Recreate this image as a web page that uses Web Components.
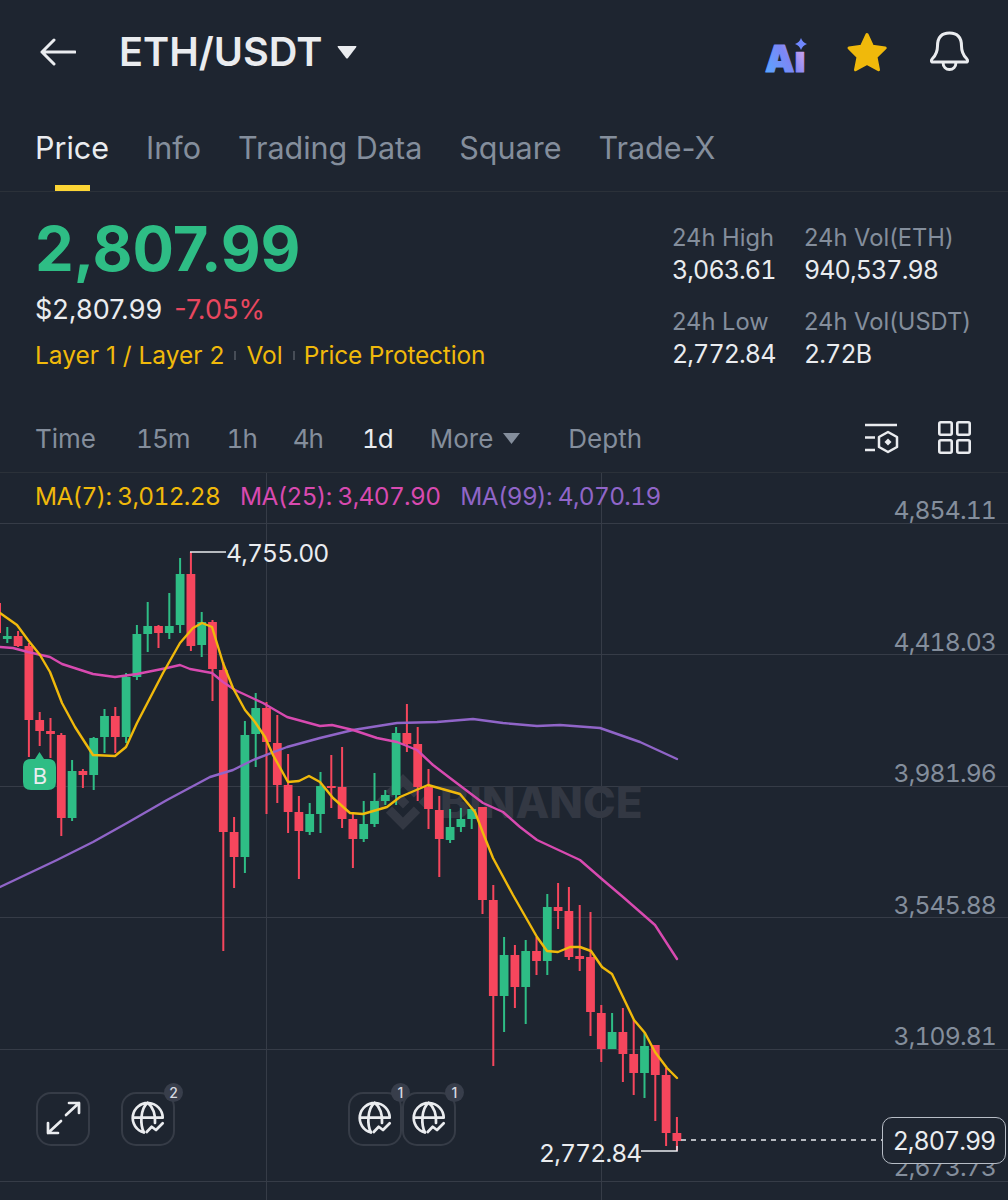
<!DOCTYPE html>
<html lang="en">
<head>
<meta charset="utf-8">
<title>ETH/USDT</title>
<style>
    html, body {
        background: #1e2530;
        color: #eaecef;
        font-family: Inter, "Open Sans", sans-serif;
        height: 1200px;
        margin: 0;
        overflow: hidden;
    }
</style>
</head>
<body>
<market-header>ETH/USDT</market-header>
<market-tabs></market-tabs>
<price-summary></price-summary>
<interval-bar></interval-bar>
<kline-chart></kline-chart>

<script>
const BACKGROUND = '#1e2530';
const GREEN = '#2ebd85';
const RED = '#f6465d';
const YELLOW = '#f0b90b';
const PINK = '#d84ab0';
const PURPLE = '#9065c8';
const GREY = '#848e9c';

// [color, wick top, body top, body bottom, wick bottom], in page pixels
const candles = [
    'g 627 636 639 643', 'r 631 636 646 647', 'r 643 646 720 757', 'r 712 720 731 746',
    'r 718 731 734 758', 'r 733 735 818 836', 'g 760 771 818 821', 'r 769 771 775 788',
    'g 737 738 775 790', 'g 709 716 737 753', 'r 707 716 737 753', 'g 673 677 737 743',
    'g 625 634 677 680', 'g 602 626 634 652', 'r 625 626 633 648', 'g 593 626 633 639',
    'g 558 574 625 633', 'r 552 574 646 651', 'g 612 622 645 657', 'r 620 622 669 701',
    'r 662 670 832 951', 'r 817 832 857 888', 'g 721 735 857 873', 'g 693 708 734 767',
    'r 702 708 742 814', 'r 715 743 785 803', 'r 754 785 812 833', 'r 796 812 831 879',
    'g 803 814 832 835', 'g 772 786 814 833', 'r 755 786 788 808', 'r 747 787 819 828',
    'r 814 819 839 868', 'g 801 824 839 842', 'g 773 801 824 827', 'g 790 795 801 805',
    'g 727 733 795 805', 'r 704 733 744 752', 'r 727 744 787 801', 'r 769 787 809 829',
    'r 796 810 839 877', 'g 809 827 840 843', 'g 808 819 827 832', 'g 808 809 819 829',
    'r 807 807 900 914', 'r 885 900 996 1066', 'g 937 955 996 1032', 'r 945 955 987 1008',
    'g 940 951 987 1024', 'r 937 951 961 975', 'g 894 907 961 975', 'r 883 907 911 929',
    'r 887 911 957 960', 'r 905 956 959 971', 'r 912 957 1012 1036', 'r 1005 1013 1049 1062',
    'g 1013 1032 1049 1049', 'r 1008 1032 1054 1082', 'r 1020 1054 1073 1095', 'g 1033 1046 1073 1098',
    'r 1045 1045 1075 1121', 'r 1068 1075 1133 1146', 'r 1117 1133 1141 1151',
];

const ma7 = '0,613 17,625 28,640 40,655 50,672 62,703 75,727 93,755 115,756 126,747 137,723 150,698 163,673 180,643 193,628 202,623 212,627 223,663 233,688 245,710 255,722 265,737 273,755 288,782 299,781 309,776 320,782 333,798 350,813 363,814 387,807 400,797 428,785 460,794 475,812 483,833 493,858 513,895 537,937 547,951 558,952 570,947 580,947 591,951 602,967 612,974 623,997 634,1020 645,1033 655,1052 667,1068 677,1078';
const ma25 = '0,647 13,648 28,652 50,657 62,664 93,674 115,677 137,674 167,668 180,665 190,669 212,673 223,682 235,690 263,703 287,717 320,726 332,725 353,730 377,738 397,742 417,750 433,765 450,778 483,803 503,812 520,827 537,840 580,860 603,880 623,897 655,925 677,959';
const ma99 = '0,887 57,860 93,842 127,823 167,800 210,777 233,770 253,760 287,747 320,738 353,730 397,723 437,722 473,719 503,723 537,726 560,725 600,728 640,742 677,759';

class MarketHeader extends HTMLElement {
    constructor() {
        super();

        this.renderRoot = this.attachShadow({ mode: 'open' });
    }

    connectedCallback() {
        this.renderRoot.innerHTML = `
            <style>
                :host {
                    align-items: center;
                    display: flex;
                    height: 104px;
                    padding: 0 38px 0 40px;
                }

                .title {
                    font-size: 39.7px;
                    font-weight: 600;
                    margin-left: 43px;
                }

                .caret {
                    margin-left: 14px;
                }

                .actions {
                    align-items: center;
                    display: flex;
                    gap: 40px;
                    margin-left: auto;
                }

                svg {
                    display: block;
                }

                .ai {
                    margin-right: -2px;
                }
            </style>
            <svg width="36" height="28" viewBox="0 0 36 28" fill="none" stroke="#eaecef" stroke-width="3" stroke-linecap="round" stroke-linejoin="round">
                <path d="M35 14H2M14 2L2 14L14 26"/>
            </svg>
            <span class="title"><slot></slot></span>
            <svg class="caret" width="20" height="13" viewBox="0 0 20 13"><path d="M1 0H19Q20 0 19 1.5L11 12Q10 13 9 12L1 1.5Q0 0 1 0Z" fill="#eaecef"/></svg>
            <div class="actions">
                <svg class="ai" width="44" height="64" viewBox="764 20 44 64">
                    <defs>
                        <linearGradient id="ai" gradientUnits="userSpaceOnUse" x1="766" x2="806" y1="72" y2="48">
                            <stop offset="0" stop-color="#5aa5ff"/>
                            <stop offset=".55" stop-color="#7d86f5"/>
                            <stop offset="1" stop-color="#d9a8ec"/>
                        </linearGradient>
                    </defs>
                    <text x="765" y="71.5" font-family="Inter, sans-serif" font-size="37" font-weight="900" fill="url(#ai)" stroke="url(#ai)" stroke-width="1" stroke-linejoin="round">Ai</text>
                    <rect x="795" y="31" width="13" height="20.5" fill="${BACKGROUND}"/>
                    <path d="M801 38Q802.5 42.5 807 44Q802.5 45.5 801 50Q799.5 45.5 795 44Q799.5 42.5 801 38Z" fill="#7088ff"/>
                </svg>
                <svg width="42" height="40" viewBox="846 32 42 40">
                    <path d="M867 34.5L872.5 46.3L885.2 48L876 57L878.5 69.7L867 63.5L855.5 69.7L858 57L849 48L861.5 46.3Z" fill="${YELLOW}" stroke="${YELLOW}" stroke-width="3" stroke-linejoin="round"/>
                </svg>
                <svg width="42" height="44" viewBox="928 30 42 44" fill="none" stroke="#eaecef" stroke-width="3" stroke-linejoin="round">
                    <path d="M933 62C931 62 931 60 932.5 58.5C936 55 937.5 52 937.5 46C937.5 37 942 33 949.5 33C957 33 961.5 37 961.5 46C961.5 52 963 55 966.5 58.5C968 60 968 62 966 62Z"/>
                    <path d="M943 62C943 72 956 72 956 62"/>
                </svg>
            </div>
        `;
    }
}

class MarketTabs extends HTMLElement {
    constructor() {
        super();

        this.renderRoot = this.attachShadow({ mode: 'open' });
    }

    connectedCallback() {
        const tabs = ['Price', 'Info', 'Trading Data', 'Square', 'Trade-X'];

        this.renderRoot.innerHTML = `
            <style>
                :host {
                    border-bottom: 1px solid #2b3139;
                    display: flex;
                    font-size: 30.5px;
                    gap: 37px;
                    height: 87px;
                    padding: 0 35px;
                }

                span {
                    color: ${GREY};
                    line-height: 88px;
                    position: relative;
                }

                .active {
                    color: #eaecef;
                }

                .active::after {
                    background: #fcd535;
                    bottom: 0;
                    content: '';
                    height: 6px;
                    left: 20px;
                    position: absolute;
                    width: 35px;
                }
            </style>
            ${tabs.map((tab, i) => `<span class="${i === 0 ? 'active' : ''}">${tab}</span>`).join('')}
        `;
    }
}

class PriceSummary extends HTMLElement {
    constructor() {
        super();

        this.renderRoot = this.attachShadow({ mode: 'open' });
    }

    connectedCallback() {
        this.renderRoot.innerHTML = `
            <style>
                :host {
                    display: grid;
                    font-size: 25px;
                    grid-template-columns: 1fr 132px 167px;
                    height: 218px;
                    padding: 0 37px 0 35px;
                }

                .price {
                    color: ${GREEN};
                    font-size: 61.5px;
                    font-weight: 700;
                    line-height: 66px;
                    margin-top: 24px;
                }

                .sub {
                    display: flex;
                    font-size: 27px;
                    gap: 12px;
                    line-height: 32px;
                    margin-top: 12px;
                }

                .change {
                    color: #e8475f;
                }

                .tags {
                    align-items: center;
                    color: ${YELLOW};
                    display: flex;
                    font-size: 24.5px;
                    gap: 10px;
                    line-height: 32px;
                    margin-top: 13px;
                }

                .tags i {
                    background: #474d57;
                    height: 9px;
                    width: 2px;
                }

                .tags span:last-child {
                    letter-spacing: -.2px;
                    margin-left: -1px;
                }

                dl {
                    line-height: 32px;
                    margin: 30px 0 0;
                    white-space: nowrap;
                }

                dt {
                    color: ${GREY};
                    font-size: 23.7px;
                }

                dd {
                    font-variant-numeric: tabular-nums;
                    letter-spacing: -.9px;
                    margin: 0 0 20px;
                }
            </style>
            <div>
                <div class="price">2,807.99</div>
                <div class="sub"><span>$2,807.99</span><span class="change">-7.05%</span></div>
                <div class="tags"><span>Layer 1 / Layer 2</span><i></i><span>Vol</span><i></i><span>Price Protection</span></div>
            </div>
            <dl>
                <dt>24h High</dt><dd>3,063.61</dd>
                <dt>24h Low</dt><dd>2,772.84</dd>
            </dl>
            <dl>
                <dt>24h Vol(ETH)</dt><dd>940,537.98</dd>
                <dt>24h Vol(USDT)</dt><dd>2.72B</dd>
            </dl>
        `;
    }
}

class IntervalBar extends HTMLElement {
    constructor() {
        super();

        this.renderRoot = this.attachShadow({ mode: 'open' });
    }

    connectedCallback() {
        this.renderRoot.innerHTML = `
            <style>
                :host {
                    align-items: center;
                    border-bottom: 1px solid #2b3139;
                    color: ${GREY};
                    display: flex;
                    font-size: 26px;
                    height: 56px;
                    padding: 0 37px 6px 35px;
                }

                .num {
                    font-variant-numeric: tabular-nums;
                    letter-spacing: -1px;
                }

                .time { margin-right: 40px; }
                .m15 { margin-right: 37px; }
                .h1 { margin-right: 36px; }
                .h4 { margin-right: 39px; }
                .d1 { color: #eaecef; margin-right: 37px; }
                .depth { margin-left: 48px; }

                .more {
                    align-items: center;
                    display: flex;
                }

                .more svg {
                    margin-left: 10px;
                }

                .tools {
                    display: flex;
                    gap: 39px;
                    margin-left: auto;
                }

                svg {
                    display: block;
                }
            </style>
            <span class="time">Time</span>
            <span class="num m15">15m</span>
            <span class="num h1">1h</span>
            <span class="num h4">4h</span>
            <span class="num d1">1d</span>
            <span class="more">More<svg width="17" height="11" viewBox="0 0 17 11"><path d="M0 0H17L8.5 11Z" fill="${GREY}"/></svg></span>
            <span class="depth">Depth</span>
            <div class="tools">
                <svg width="34" height="34" viewBox="865 422 34 34" fill="none" stroke="#eaecef" stroke-width="2.5">
                    <path d="M865 426H897M865 438.5H875M865 451H875"/>
                    <path d="M888 433L897 438V448L888 453L879 448V438Z" stroke-linejoin="round"/>
                    <path d="M888 439.5L891.5 443L888 446.5L884.5 443Z" fill="#eaecef" stroke="none"/>
                </svg>
                <svg width="33" height="33" viewBox="938 422 33 33" fill="none" stroke="#eaecef" stroke-width="2.6">
                    <rect x="939.3" y="423.3" width="12.4" height="12.4" rx="1.5"/>
                    <rect x="957.3" y="423.3" width="12.4" height="12.4" rx="1.5"/>
                    <rect x="939.3" y="441.3" width="12.4" height="12.4" rx="1.5"/>
                    <rect x="957.3" y="441.3" width="12.4" height="12.4" rx="1.5"/>
                </svg>
            </div>
        `;
    }
}

class ChartButton extends HTMLElement {
    get badge() {
        return this.getAttribute('badge');
    }

    constructor() {
        super();

        this.renderRoot = this.attachShadow({ mode: 'open' });
    }

    connectedCallback() {
        this.renderRoot.innerHTML = `
            <style>
                :host {
                    background: ${BACKGROUND};
                    border: 2px solid #363c47;
                    border-radius: 15px;
                    box-sizing: border-box;
                    display: block;
                    height: 54px;
                    position: absolute;
                    top: 619px;
                    width: 54px;
                }

                ::slotted(svg) {
                    display: block;
                    left: -2px;
                    position: absolute;
                    top: -2px;
                }

                b {
                    align-items: center;
                    background: #383e4b;
                    border-radius: 50%;
                    color: #d5d9e0;
                    display: flex;
                    font-size: 14px;
                    font-weight: 500;
                    height: 19px;
                    justify-content: center;
                    position: absolute;
                    right: -10px;
                    top: -11px;
                    width: 19px;
                }
            </style>
            <slot></slot>
            ${this.badge ? `<b>${this.badge}</b>` : ''}
        `;
    }
}

class KlineChart extends HTMLElement {
    constructor() {
        super();

        this.renderRoot = this.attachShadow({ mode: 'open' });
    }

    renderCandles() {
        return candles.map((candle, i) => {
            const [color, wickTop, bodyTop, bodyBottom, wickBottom] = candle.split(' ');
            const x = 7.3 + i * 10.8;
            const fill = color === 'g' ? GREEN : RED;

            return `
                <rect x="${x - 1}" y="${wickTop}" width="2" height="${wickBottom - wickTop}" fill="${fill}"/>
                <rect x="${x - 4.4}" y="${bodyTop}" width="8.8" height="${bodyBottom - bodyTop}" fill="${fill}"/>
            `;
        }).join('');
    }

    connectedCallback() {
        const gridLines = [523, 654, 786, 917, 1049, 1181];
        const axis = [['4,854.11', 519], ['4,418.03', 651], ['3,981.96', 782], ['3,545.88', 914], ['3,109.81', 1045], ['2,673.73', 1176]];
        const globe = `
            <svg width="54" height="54" viewBox="0 0 54 54" fill="none" stroke="#eaecef" stroke-width="2.7" stroke-linecap="round" stroke-linejoin="round">
                <path d="M23 40.5A15 15 0 1 1 41.7 25.7M11.7 25.7H41.7M26.7 10.7C19 17 19 33 23 40.5M26.7 10.7C33 16 34.5 23 34 31"/>
                <path d="M25.7 40L30.7 34.7L35 38L41.7 31.3"/>
            </svg>
        `;

        this.renderRoot.innerHTML = `
            <style>
                :host {
                    display: block;
                    font-size: 24.4px;
                    height: 727px;
                    overflow: hidden;
                    position: relative;
                }

                svg.plot {
                    display: block;
                    left: 0;
                    position: absolute;
                    top: 0;
                }

                svg text {
                    font-family: Inter, "Open Sans", sans-serif;
                    font-variant-numeric: tabular-nums;
                }

                .value {
                    letter-spacing: -.85px;
                }

                .legend {
                    display: flex;
                    font-variant-numeric: tabular-nums;
                    gap: 20px;
                    letter-spacing: -.65px;
                    line-height: 32px;
                    padding: 7px 35px 0;
                    position: relative;
                }

                .ticker {
                    align-items: center;
                    background: ${BACKGROUND};
                    border: 1.5px solid #b7bdc6;
                    border-radius: 10px;
                    box-sizing: border-box;
                    display: flex;
                    font-size: 25px;
                    font-variant-numeric: tabular-nums;
                    height: 47px;
                    justify-content: center;
                    left: 882px;
                    letter-spacing: -1px;
                    position: absolute;
                    top: 644px;
                    width: 124px;
                }
            </style>
            <svg class="plot" width="1008" height="727" viewBox="0 473 1008 727">
                ${gridLines.map(y => `<rect x="0" y="${y}" width="1008" height="1" fill="#363c47"/>`).join('')}
                <rect x="266" y="473" width="1" height="727" fill="#363c47"/>
                <rect x="601" y="473" width="1" height="727" fill="#363c47"/>

                <g fill="#333843">
                    <g transform="translate(375 774) scale(1.75)">
                        <path d="M9.8 13.4L16 7.2l6.2 6.2 3.6-3.6L16 0 6.2 9.8l3.6 3.6zM0 16l3.6-3.6 3.6 3.6-3.6 3.6zM9.8 18.6L16 24.8l6.2-6.2 3.6 3.6L16 32l-9.8-9.8zM24.8 16l3.6-3.6 3.6 3.6-3.6 3.6zM19.65 16L16 12.34 12.35 16 16 19.66z"/>
                    </g>
                    <text x="440" y="818" font-size="44" font-weight="800">BINANCE</text>
                </g>

                ${axis.map(([value, y]) => `<text class="value" x="996" y="${y}" text-anchor="end" font-size="24.7" fill="${GREY}">${value}</text>`).join('')}

                <rect x="-1" y="603" width="2" height="30" fill="${RED}"/>
                ${this.renderCandles()}

                <g fill="none" stroke-width="2.4" stroke-linejoin="round" stroke-linecap="round">
                    <polyline points="${ma99}" stroke="${PURPLE}"/>
                    <polyline points="${ma25}" stroke="${PINK}"/>
                    <polyline points="${ma7}" stroke="${YELLOW}"/>
                </g>

                <path d="M31 759H35L39.5 752L44 759H48Q56 759 56 767V782Q56 790 48 790H31Q23 790 23 782V767Q23 759 31 759Z" fill="${GREEN}"/>
                <text x="40" y="784" text-anchor="middle" font-size="22" fill="#eaecef">B</text>

                <path d="M190 552H226" stroke="#eaecef" stroke-width="1.5"/>
                <text class="value" x="226" y="562" font-size="24.7" fill="#eaecef">4,755.00</text>
                <path d="M641 1151H677V1146" fill="none" stroke="#eaecef" stroke-width="1.5"/>
                <text class="value" x="539" y="1162" font-size="24.7" fill="#eaecef">2,772.84</text>
                <path d="M681 1140H882" stroke="#eaecef" stroke-width="1.5" stroke-dasharray="5 5"/>
            </svg>

            <div class="legend">
                <span style="color: ${YELLOW}">MA(7): 3,012.28</span>
                <span style="color: ${PINK}">MA(25): 3,407.90</span>
                <span style="color: ${PURPLE}">MA(99): 4,070.19</span>
            </div>

            <chart-button style="left: 36px">
                <svg width="54" height="54" viewBox="0 0 54 54" fill="none" stroke="#eaecef" stroke-width="2.7" stroke-linecap="round" stroke-linejoin="round">
                    <path d="M30 23L43 11M33 11H43V21M25 29L12 41M12 31V41H22"/>
                </svg>
            </chart-button>
            <chart-button style="left: 121px" badge="2">${globe}</chart-button>
            <chart-button style="left: 348px" badge="1">${globe}</chart-button>
            <chart-button style="left: 402px" badge="1">${globe}</chart-button>

            <div class="ticker">2,807.99</div>
        `;
    }
}

window.customElements.define('market-header', MarketHeader);
window.customElements.define('market-tabs', MarketTabs);
window.customElements.define('price-summary', PriceSummary);
window.customElements.define('interval-bar', IntervalBar);
window.customElements.define('chart-button', ChartButton);
window.customElements.define('kline-chart', KlineChart);
</script>
</body>
</html>
